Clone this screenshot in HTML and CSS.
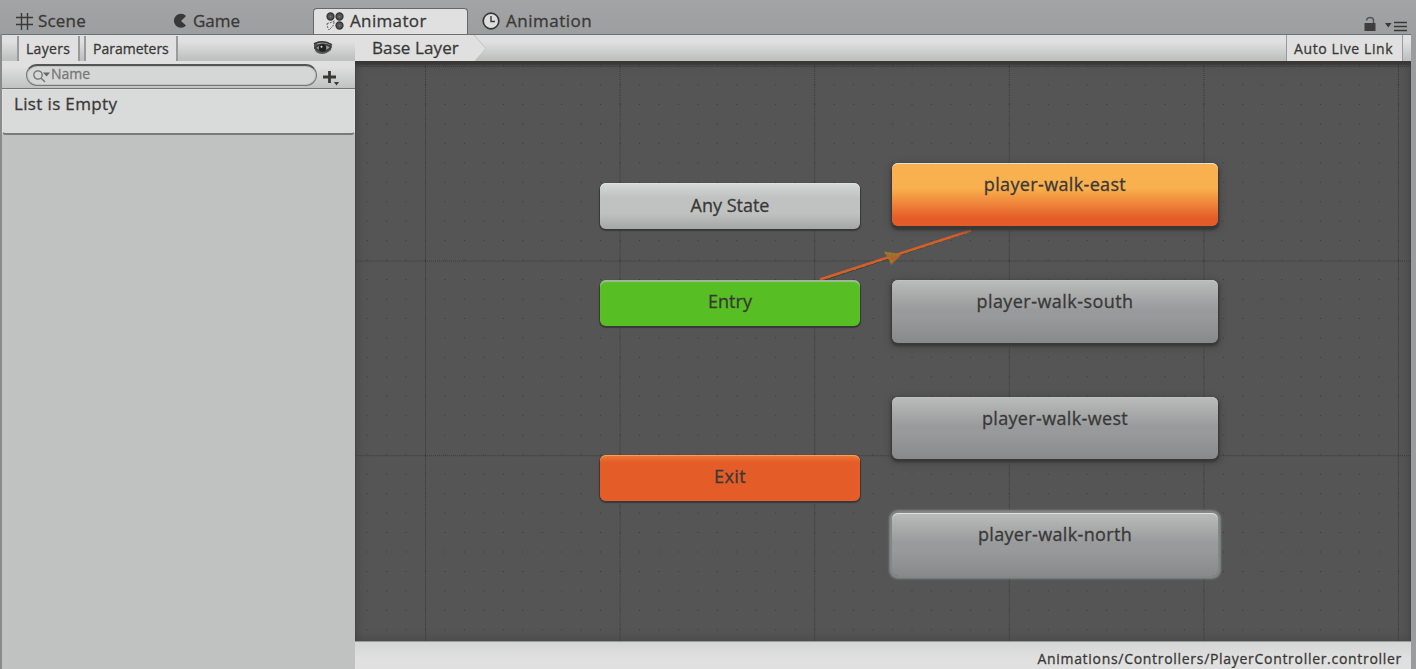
FILE: index.html
```html
<!DOCTYPE html>
<html lang="en">
<head>
<meta charset="utf-8">
<title>Animator</title>
<link rel="stylesheet" href="styles.css">
</head>
<body>
<div class="window">
  <nav class="tabs">
    <div class="tab tab-scene">
      <svg class="tab-icon" width="17" height="17" viewBox="0 0 17 17"><path d="M5.500 0v17M11.500 0v17M0 4.500h17M0 11.500h17" stroke="#3b3a38" stroke-width="1.400" fill="none"/></svg>
      <span>Scene</span>
    </div>
    <div class="tab tab-game">
      <svg class="tab-icon" width="14" height="16" viewBox="0 0 14 16"><path d="M13 3A7 7 0 1 0 13 12.500L8 8z" fill="#393836"/></svg>
      <span>Game</span>
    </div>
    <div class="tab tab-animator active">
      <svg class="tab-icon" width="18" height="19" viewBox="0 0 18 19"><g fill="#555" stroke="#393836" stroke-width="1.500"><circle cx="4.500" cy="4.500" r="3.400"/><circle cx="13.500" cy="4.500" r="3.400"/><circle cx="13.500" cy="13.500" r="3.400"/></g><g fill="#888"><circle cx="4.500" cy="4.500" r=".8"/><circle cx="13.500" cy="4.500" r=".8"/><circle cx="13.500" cy="13.500" r=".8"/></g><path d="M1 11.500L5 10.500L8.500 9L7 14L3 18L1.500 15z" fill="none" stroke="#666" stroke-dasharray="2 1"/></svg>
      <span>Animator</span>
    </div>
    <div class="tab tab-animation">
      <svg class="tab-icon" width="18" height="18" viewBox="0 0 18 18"><circle cx="9" cy="9" r="7.800" fill="#dedede" stroke="#393836" stroke-width="1.700"/><path d="M9 4v5.500h4" fill="none" stroke="#393836" stroke-width="1.400"/></svg>
      <span>Animation</span>
    </div>
    <div class="window-tools">
      <svg width="12" height="16" viewBox="0 0 12 16"><path d="M2.500 4.500C3 .5 9.500.5 9.500 4.500V8" fill="none" stroke="#555" stroke-width="1.500"/><path d="M.5 7h11v8H.5z" fill="#3f3e3c"/></svg>
      <svg class="menu-icon" width="22" height="11" viewBox="0 0 22 11"><path d="M0 2h6.500L3.300 6.500z" fill="#393836"/><path d="M9 1.500h13M9 5.500h13M9 9.500h13" stroke="#393836" stroke-width="1.400"/></svg>
    </div>
  </nav>

  <div class="workspace">
    <aside class="sidebar">
      <div class="toolbar side-toolbar">
        <span class="side-tab layers">Layers</span>
        <span class="side-tab parameters">Parameters</span>
        <svg class="eye" width="20" height="16" viewBox="0 0 20 16"><path d="M1 3Q9-1 19 4L18 10Q10 17 3 12L1 8z" fill="#555"/><path d="M1 4Q10-1 19 5M2 8Q9 1 18 7Q11 15 2 8z" fill="#999" stroke="#393836" stroke-width="1.500"/><circle cx="9.500" cy="8" r="3.700" fill="#222"/><circle cx="8.500" cy="6.700" r="1" fill="#ddd"/></svg>
      </div>
      <div class="search-row">
        <div class="search">
          <svg width="18" height="14" viewBox="0 0 18 14"><circle cx="5" cy="6" r="4.200" fill="none" stroke="#707070" stroke-width="1.300"/><path d="M8 9l4 4" stroke="#777" stroke-width="1.500"/><path d="M10 3.500h7l-3.500 4z" fill="#666"/></svg>
          <span>Name</span>
        </div>
        <svg class="add" width="17" height="16" viewBox="0 0 17 16"><path d="M0 7h13M6.500 1v12" stroke="#393836" stroke-width="2.800"/><path d="M11 12h5l-2.500 3.500z" fill="#393836"/></svg>
      </div>
      <div class="empty-list">List is Empty</div>
    </aside>

    <main class="main">
      <div class="toolbar main-toolbar">
        <div class="crumb">
          <svg class="crumb-shape" width="132" height="27" viewBox="0 0 132 27"><path d="M0 0H119L131 13.500L119 27H0z" fill="#e0e0e0"/><path d="M119 0L131 13.500L119 27" fill="none" stroke="#c0c2c1"/></svg>
          <span class="crumb-text">Base Layer</span>
        </div>
        <div class="live-link">Auto Live Link</div>
      </div>
      <div class="graph">
        <svg class="grid" width="1056" height="580">
          <defs>
            <pattern id="minor" x="70" y="4" width="19.460" height="19.460" patternUnits="userSpaceOnUse"><path d="M0 .5h1" stroke="#393836" stroke-width="1"/></pattern>
            <pattern id="rule" x="70" y="4" width="194.600" height="194.600" patternUnits="userSpaceOnUse"><path d="M.5 0V194.600M0 1.500H194.600" stroke="#393836" stroke-dasharray="1 1"/></pattern>
          </defs>
          <rect width="1056" height="580" fill="url(#minor)"/>
          <rect width="1056" height="580" fill="url(#rule)"/>
          <path d="M465 219L616 169" stroke="#3f3d39" stroke-width="1" transform="translate(0 1.500)"/>
          <path d="M465 218.500L616 169.500" stroke="#dc5b29" stroke-width="2.500"/>
          <path d="M465 219.500L616 170.500" stroke="#6f9a30" stroke-width="1" stroke-dasharray="2 7"/>
          <path d="M529 190.500L547 193L536 204L533 197z" fill="#b2622b"/>
          <path d="M530 192L543 194M534 196l3 5" stroke="#62a12f" stroke-width="1.500" stroke-dasharray="2 2"/>
        </svg>
        <div class="node base any">Any State</div>
        <div class="node base entry">Entry</div>
        <div class="node base exit">Exit</div>
        <div class="node state east">player-walk-east</div>
        <div class="node state south">player-walk-south</div>
        <div class="node state west">player-walk-west</div>
        <div class="node state north">player-walk-north</div>
      </div>
      <footer class="status">Animations/Controllers/PlayerController.controller</footer>
    </main>
  </div>
</div>
</body>
</html>
```
FILE: styles.css
```css
* { box-sizing: border-box; }
body { margin: 0; font-family: "Open Sans", "Noto Sans", sans-serif; color: #393836; -webkit-text-stroke: .3px currentColor; }
svg { display: block; flex: none; }
.window { width: 1416px; height: 669px; overflow: hidden; display: flex; flex-direction: column; background: #9b9c9e; }

/* Window tabs */
.tabs { height: 34px; flex: none; display: flex; align-items: flex-end; background: linear-gradient(#a3a4a5, #9d9ea0); }
.tab { height: 26px; display: flex; align-items: center; font-size: 17px; line-height: 24px; white-space: nowrap; }
.tab-scene { width: 156px; padding-left: 16px; gap: 5px; letter-spacing: .2px; }
.tab-game { width: 157px; padding-left: 17px; gap: 6px; }
.tab-animator { width: 155px; padding-left: 12px; gap: 6px; letter-spacing: .35px; }
.tab-animator span { margin-top: -2px; }
.tab-animation { padding-left: 14px; gap: 6px; letter-spacing: .5px; }
.tab.active { background: #e0e0e0; border: 1px solid #66676a; border-bottom: 0; border-radius: 4px 4px 0 0; }
.window-tools { margin-left: auto; padding: 0 9px 2px 0; display: flex; align-items: flex-end; gap: 9px; }

.workspace { flex: 1; min-height: 0; display: flex; padding-right: 5px; }
.toolbar { height: 27px; flex: none; display: flex; border-top: 1px solid #6f7072; background: linear-gradient(#e0e0e0 25%, #c0c2c1 90%); }

/* Sidebar */
.sidebar { width: 355px; flex: none; display: flex; flex-direction: column; background: #c0c2c1; border-left: 2px solid #8a8b8d; }
.side-toolbar { padding: 0 22px 0 15px; align-items: stretch; }
.side-tab { margin-top: 1px; background: #e0e0e0; border: 1px solid #989a9b; border-width: 0 2px; font-size: 14px; line-height: 25px; padding-left: 7px; white-space: nowrap; }
.layers { width: 63px; letter-spacing: .3px; }
.parameters { width: 94px; margin-left: 4px; }
.eye { margin: 5px 0 0 auto; }
.search-row { height: 28px; flex: none; display: flex; padding: 3px 15px 0 24px; justify-content: space-between; border-bottom: 1px solid #777; background: linear-gradient(#e0e0e0 20%, #c0c2c1); }
.search { width: 291px; height: 22px; display: flex; padding: 4px 0 0 6px; border: 1px solid #777; border-top: 2px solid #555; border-radius: 11px; background: #d5d6d6; box-shadow: inset 0 0 0 1px #c0c2c1; font-size: 14px; line-height: 8px; color: #777; }
.search svg { margin-top: -1px; }
.add { margin-top: 6px; }
.empty-list { height: 46px; flex: none; padding: 2px 11px; background: #d9dada; border: 1px solid #e0e0e0; border-bottom: 2px solid #77797a; border-radius: 0 0 4px 4px; font-size: 17px; line-height: 24px; letter-spacing: .35px; }

/* Graph column */
.main { flex: 1; display: flex; flex-direction: column; }
.main-toolbar { justify-content: space-between; }
.crumb { display: grid; }
.crumb-shape, .crumb-text { grid-area: 1 / 1; }
.crumb-text { z-index: 1; padding-left: 17px; font-size: 17px; line-height: 26px; letter-spacing: .1px; }
.live-link { width: 117px; margin-right: 8px; padding-left: 7px; background: #e0e0e0; border: 1px solid #989a9b; border-width: 0 1px; font-size: 14px; line-height: 27px; letter-spacing: .62px; white-space: nowrap; }
.graph { position: relative; height: 580px; flex: none; background: #555; overflow: hidden; box-shadow: inset 0 4px 2px #393836, inset 0 0 12px #444; }
.status { flex: 1; padding-right: 9px; text-align: right; border-top: 1px solid #989a9b; background: linear-gradient(#d4d5d5, #e0e0e0 50%); font-size: 14px; line-height: 33px; letter-spacing: .7px; white-space: nowrap; }

/* State nodes on the free canvas */
.node { position: absolute; border-radius: 6px; text-align: center; font-size: 18px; line-height: 43px; letter-spacing: .35px; white-space: nowrap; }
.base { left: 245px; width: 260px; height: 46px; letter-spacing: 0; box-shadow: 0 1px 1px 1px #393836; }
.state { left: 537px; width: 326px; height: 63px; background: linear-gradient(#bbbdbc, #989a9b 48%, #989a9b 58%, #87898a); box-shadow: inset 0 1px #c0c2c1, 0 2px 2px 1px #393836, 0 2px 6px 2px #444; }
.any { top: 122px; line-height: 44px; background: linear-gradient(#d8d9d9, #c0c2c1 32%, #c0c2c1 65%, #a5a7a7); box-shadow: inset 0 1px #e0e0e0, 0 1px 1px 1px #393836; }
.entry { top: 219px; background: #57bf23; box-shadow: inset 0 2px 1px #a4b79b, 0 1px 1px 1px #393836; }
.exit { top: 394px; letter-spacing: .4px; background: linear-gradient(#ec7b38, #e45c28 16%); box-shadow: inset 0 1px #f9a04a, 0 1px 1px 1px #393836; }
.east { top: 102px; background: linear-gradient(#f9b04e 40%, #e45c28 88%); box-shadow: inset 0 1px #e0e0e0, 0 3px 2px 1px #393836, 0 2px 6px 2px #444; }
.south { top: 219px; letter-spacing: .45px; }
.west { top: 336px; height: 62px; }
.north { top: 452px; height: 63px; box-shadow: inset 0 1px #e0e0e0, 0 0 2px 3px #858788; }
```
